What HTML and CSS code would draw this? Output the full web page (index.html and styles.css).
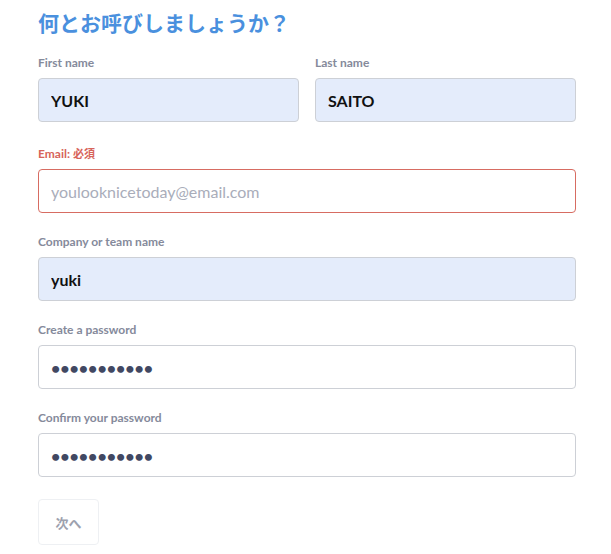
FILE: index.html
```
<!DOCTYPE html>
<html lang="ja">
<head>
<meta charset="utf-8">
<title>Sign up</title>
<link rel="stylesheet" href="styles.css">
</head>
<body>
<form class="signup">
  <h1 class="title">何とお呼びしましょうか？</h1>
  <div class="row row-first">
    <div class="field">
      <label class="label">First name</label>
      <input class="input input-filled" type="text" value="YUKI">
    </div>
    <div class="field">
      <label class="label">Last name</label>
      <input class="input input-filled" type="text" value="SAITO">
    </div>
  </div>
  <div class="field">
    <label class="label label-error">Email: <span class="label-cjk">必須</span></label>
    <input class="input input-error" type="email" placeholder="youlooknicetoday@email.com">
  </div>
  <div class="field">
    <label class="label">Company or team name</label>
    <input class="input input-filled" type="text" value="yuki">
  </div>
  <div class="field">
    <label class="label">Create a password</label>
    <input class="input input-password" type="password" value="yukiyukiyuk">
  </div>
  <div class="field">
    <label class="label">Confirm your password</label>
    <input class="input input-password" type="password" value="yukiyukiyuk">
  </div>
  <button class="next" type="button">次へ</button>
</form>
</body>
</html>
```
FILE: styles.css
```
html, body {
  margin: 0;
  padding: 0;
  background: #ffffff;
}
body {
  font-family: "Lato", "Noto Sans CJK JP", sans-serif;
}
.signup {
  width: 538px;
  padding: 9px 0 0 38px;
  display: flex;
  flex-direction: column;
  gap: 21px;
}
.title {
  margin: 0 0 -1px 0;
  font-family: "Noto Sans CJK JP", sans-serif;
  font-size: 21px;
  line-height: 26px;
  font-weight: 700;
  color: #4a90de;
}
.row {
  display: grid;
  grid-template-columns: 1fr 1fr;
  gap: 16px;
}
.row-first {
  margin-bottom: 3px;
}
.field {
  display: flex;
  flex-direction: column;
}
.label {
  display: block;
  height: 16px;
  font-family: "Lato", "Noto Sans CJK JP", sans-serif;
  font-size: 12px;
  line-height: 16px;
  font-weight: 700;
  color: #858a9b;
  margin-bottom: 7px;
}
.label-error {
  color: #d7645a;
}
.label-cjk {
  font-family: "Noto Sans CJK JP", sans-serif;
  font-size: 11px;
  line-height: 1;
  font-weight: 700;
}
.input {
  box-sizing: border-box;
  width: 100%;
  height: 44px;
  margin: 0;
  padding: 0 12px;
  border: 1px solid #cdd0d6;
  border-radius: 4px;
  background: #ffffff;
  font-family: "Lato", sans-serif;
  font-size: 16px;
  font-weight: 700;
  color: #111111;
  outline: none;
}
.input-filled {
  background: #e4ecfb;
}
.input-error {
  border-color: #d76c62;
  font-weight: 400;
}
.input-error::placeholder {
  color: #a9adba;
  font-weight: 400;
}
.input-password {
  color: #414862;
}
.next {
  align-self: flex-start;
  width: 61px;
  height: 46px;
  margin-top: 1px;
  padding: 0;
  border: 1px solid #eef0f3;
  border-radius: 4px;
  background: #ffffff;
  font-family: "Noto Sans CJK JP", sans-serif;
  font-size: 13px;
  font-weight: 700;
  color: #9da1ae;
}
```
